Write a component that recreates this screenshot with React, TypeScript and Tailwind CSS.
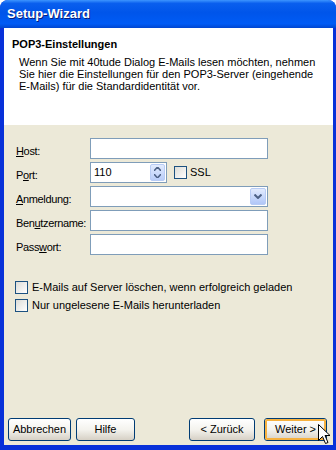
import React from 'react'

const font = { fontFamily: '"Liberation Sans", Arial, sans-serif' }

function Field({ label, u, children }: { label: string; u: number; children: React.ReactNode }) {
  return (
    <div className="flex items-start h-[21px]">
      <div className="w-[74px] min-w-0 shrink-0 pt-[7px] text-[11px] leading-[13px] tracking-[-0.35px] text-black whitespace-nowrap">
        {label.slice(0, u)}
        <span className="underline">{label[u]}</span>
        {label.slice(u + 1)}
      </div>
      {children}
    </div>
  )
}

function Checkbox() {
  return (
    <div className="w-[13px] h-[13px] border border-[#1C5180] bg-gradient-to-br from-[#DCDCD7] to-white shrink-0" />
  )
}

function XPButton({ label, width, active }: { label: string; width: number; active?: boolean }) {
  return (
    <div
      className="h-[23px] rounded-[3px] border border-[#003C74] bg-gradient-to-b from-white via-[#F4F3EE] to-[#D6D0C5] flex items-center justify-center text-[11px] text-black"
      style={{ width }}
    >
      <div
        className={
          active
            ? 'w-full h-full rounded-[2px] border-2 border-[#F6B13F] flex items-center justify-center'
            : 'w-full h-full flex items-center justify-center'
        }
      >
        {label}
      </div>
    </div>
  )
}

export default function App() {
  return (
    <div className="w-[336px] h-[450px] bg-[#0831D9] rounded-t-[8px] overflow-hidden flex flex-col relative" style={font}>
      {/* Title bar */}
      <div className="h-[28px] shrink-0 bg-[linear-gradient(to_bottom,#3D95FF_0%,#0A5FEE_12%,#0055EA_45%,#005BF5_85%,#0046D0_100%)] flex items-center pl-[7px]">
        <span className="text-white font-bold text-[13px] [text-shadow:1px_1px_0_#0A1E7A]">
          Setup-Wizard
        </span>
      </div>

      <div className="flex-1 flex flex-col ml-[4px] mr-[3px] mb-[5px] bg-[#ECE9D8]">
        {/* Header */}
        <div className="h-[97px] bg-white pt-[10px] pl-[8px] text-black">
          <div className="text-[11px] font-bold leading-[13px]">POP3-Einstellungen</div>
          <div className="pl-[7px] mt-[5px] text-[11px] leading-[12px]">
            Wenn Sie mit 40tude Dialog E-Mails lesen möchten, nehmen
            <br />
            Sie hier die Einstellungen für den POP3-Server (eingehende
            <br />
            E-Mails) für die Standardidentität vor.
          </div>
        </div>

        {/* Form */}
        <div className="pt-[13px] pl-[12px] flex flex-col gap-[3px]">
          <Field label="Host:" u={0}>
            <div className="w-[178px] h-[21px] border border-[#7F9DB9] bg-white" />
          </Field>
          <Field label="Port:" u={1}>
            <div className="w-[77px] h-[21px] border border-[#7F9DB9] bg-white flex items-center justify-between pl-[3px] pr-[1px]">
              <span className="text-[11px]">110</span>
              <div className="w-[15px] h-[17px] rounded-[2px] border border-[#B8CCF5] bg-gradient-to-b from-[#E2EBFD] to-[#B9CDF9] flex flex-col items-center justify-center gap-[3px]">
                <svg width="7" height="4" viewBox="0 0 7 4"><path d="M0 4 L3.5 0 L7 4" fill="none" stroke="#4D6185" strokeWidth="1.5" /></svg>
                <svg width="7" height="4" viewBox="0 0 7 4"><path d="M0 0 L3.5 4 L7 0" fill="none" stroke="#4D6185" strokeWidth="1.5" /></svg>
              </div>
            </div>
            <div className="flex items-center ml-[7px] mt-[4px] gap-[3px]">
              <Checkbox />
              <span className="text-[11px] leading-[13px]">SSL</span>
            </div>
          </Field>
          <Field label="Anmeldung:" u={0}>
            <div className="w-[178px] h-[21px] border border-[#7F9DB9] bg-white flex items-center justify-end pr-[1px]">
              <div className="w-[16px] h-[17px] rounded-[2px] border border-[#B8CCF5] bg-gradient-to-b from-[#E2EBFD] to-[#B1C7F8] flex items-center justify-center">
                <svg width="8" height="5" viewBox="0 0 8 5"><path d="M0.5 0.5 L4 4 L7.5 0.5" fill="none" stroke="#4D6185" strokeWidth="2" /></svg>
              </div>
            </div>
          </Field>
          <Field label="Benutzername:" u={3}>
            <div className="w-[178px] h-[21px] border border-[#7F9DB9] bg-white" />
          </Field>
          <Field label="Passwort:" u={4}>
            <div className="w-[178px] h-[21px] border border-[#7F9DB9] bg-white" />
          </Field>
        </div>

        {/* Options */}
        <div className="pt-[26px] pl-[11px] flex flex-col gap-[5px] text-[11px] leading-[13px]">
          <div className="flex items-center gap-[4px]">
            <Checkbox />
            <span>E-Mails auf Server löschen, wenn erfolgreich geladen</span>
          </div>
          <div className="flex items-center gap-[4px]">
            <Checkbox />
            <span>Nur ungelesene E-Mails herunterladen</span>
          </div>
        </div>

        {/* Buttons */}
        <div className="mt-auto mb-[4px] flex items-center pl-[4px]">
          <XPButton label="Abbrechen" width={63} />
          <div className="ml-[5px]">
            <XPButton label="Hilfe" width={59} />
          </div>
          <div className="ml-[54px]">
            <XPButton label="< Zurück" width={66} />
          </div>
          <div className="ml-[9px]">
            <XPButton label="Weiter >" width={63} active />
          </div>
        </div>
      </div>

      {/* Mouse cursor */}
      <svg className="absolute left-[318px] top-[424px]" width="13" height="21" viewBox="0 0 13 21">
        <path d="M0.5 0.5 L0.5 16.5 L4.5 12.5 L7.5 19.5 L10 18.5 L7 11.5 L12 11.5 Z" fill="white" stroke="black" strokeWidth="1" strokeLinejoin="miter" />
      </svg>
    </div>
  )
}
